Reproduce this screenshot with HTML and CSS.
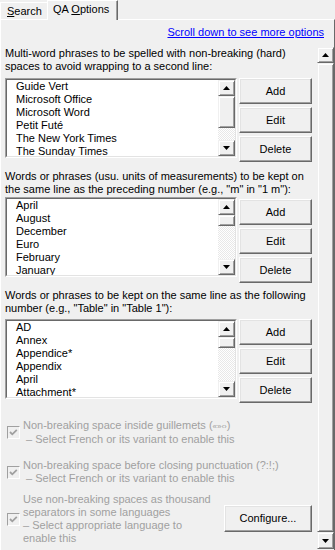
FILE: index.html
```html
<!DOCTYPE html>
<html>
<head>
<meta charset="utf-8">
<link rel="stylesheet" href="styles.css">
</head>
<body>
<div class="tabs">
  <div class="tab"><u>S</u>earch</div>
  <div class="tab active">QA <u>O</u>ptions</div>
</div>
<div class="panel">
  <div class="linkrow"><a class="link" href="#">Scroll down to see more options</a></div>
  <div class="body">
    <div class="content">
      <section class="group g1">
        <p class="label">Multi-word phrases to be spelled with non-breaking (hard)<br>spaces to avoid wrapping to a second line:</p>
        <div class="row">
          <div class="list"><div class="list-in">
            <ul class="items">
              <li>Guide Vert</li><li>Microsoft Office</li><li>Microsoft Word</li><li>Petit Futé</li><li>The New York Times</li><li>The Sunday Times</li>
            </ul>
            <div class="lscroll">
              <div class="arrow raised"><svg width="7" height="4" viewBox="0 0 7 4"><polygon points="0,4 3.5,0 7,4" fill="#000"/></svg></div>
              <div class="thumb raised thumb-lg"></div>
              <div class="track"></div>
              <div class="arrow raised"><svg width="7" height="4" viewBox="0 0 7 4"><polygon points="0,0 7,0 3.5,4" fill="#000"/></svg></div>
            </div>
          </div></div>
          <div class="btns">
            <button class="btn">Add</button>
            <button class="btn">Edit</button>
            <button class="btn">Delete</button>
          </div>
        </div>
      </section>
      <section class="group g2">
        <p class="label">Words or phrases (usu. units of measurements) to be kept on<br>the same line as the preceding number (e.g., "m" in "1&nbsp;m"):</p>
        <div class="row">
          <div class="list"><div class="list-in">
            <ul class="items">
              <li>April</li><li>August</li><li>December</li><li>Euro</li><li>February</li><li>January</li>
            </ul>
            <div class="lscroll">
              <div class="arrow raised"><svg width="7" height="4" viewBox="0 0 7 4"><polygon points="0,4 3.5,0 7,4" fill="#000"/></svg></div>
              <div class="thumb raised thumb-sm"></div>
              <div class="track"></div>
              <div class="arrow raised"><svg width="7" height="4" viewBox="0 0 7 4"><polygon points="0,0 7,0 3.5,4" fill="#000"/></svg></div>
            </div>
          </div></div>
          <div class="btns">
            <button class="btn">Add</button>
            <button class="btn">Edit</button>
            <button class="btn">Delete</button>
          </div>
        </div>
      </section>
      <section class="group g3">
        <p class="label">Words or phrases to be kept on the same line as the following<br>number (e.g., "Table" in "Table&nbsp;1"):</p>
        <div class="row">
          <div class="list"><div class="list-in">
            <ul class="items">
              <li>AD</li><li>Annex</li><li>Appendice*</li><li>Appendix</li><li>April</li><li>Attachment*</li>
            </ul>
            <div class="lscroll">
              <div class="arrow raised"><svg width="7" height="4" viewBox="0 0 7 4"><polygon points="0,4 3.5,0 7,4" fill="#000"/></svg></div>
              <div class="thumb raised thumb-sm"></div>
              <div class="track"></div>
              <div class="arrow raised"><svg width="7" height="4" viewBox="0 0 7 4"><polygon points="0,0 7,0 3.5,4" fill="#000"/></svg></div>
            </div>
          </div></div>
          <div class="btns">
            <button class="btn">Add</button>
            <button class="btn">Edit</button>
            <button class="btn">Delete</button>
          </div>
        </div>
      </section>

      <div class="check c1">
        <span class="cb"><svg width="11" height="11" viewBox="0 0 11 11"><polyline points="2,5 4.3,7.3 8.8,2.8" fill="none" stroke="#a0a0a0" stroke-width="1.8"/></svg></span>
        <p class="ctext">Non-breaking space inside guillemets (<span class="small">«»‹›</span>)<br>&nbsp;– Select French or its variant to enable this</p>
      </div>
      <div class="check c2">
        <span class="cb"><svg width="11" height="11" viewBox="0 0 11 11"><polyline points="2,5 4.3,7.3 8.8,2.8" fill="none" stroke="#a0a0a0" stroke-width="1.8"/></svg></span>
        <p class="ctext">Non-breaking space before closing punctuation (?:!;)<br>&nbsp;– Select French or its variant to enable this</p>
      </div>
      <div class="check c3">
        <span class="cb"><svg width="11" height="11" viewBox="0 0 11 11"><polyline points="2,5 4.3,7.3 8.8,2.8" fill="none" stroke="#a0a0a0" stroke-width="1.8"/></svg></span>
        <p class="ctext grow">Use non-breaking spaces as thousand<br>separators in some languages<br>– Select appropriate language to<br>enable this</p>
        <button class="btn cfg">Configure...</button>
      </div>
    </div>
    <div class="vscroll">
      <div class="varrow raised"><svg width="7" height="4" viewBox="0 0 7 4"><polygon points="0,4 3.5,0 7,4" fill="#000"/></svg></div>
      <div class="vthumb raised"></div>
      <div class="varrow raised"><svg width="7" height="4" viewBox="0 0 7 4"><polygon points="0,0 7,0 3.5,4" fill="#000"/></svg></div>
    </div>
  </div>
</div>
</body>
</html>
```
FILE: styles.css
```css
html, body {
  margin: 0;
  padding: 0;
}
body {
  width: 335px;
  height: 550px;
  overflow: hidden;
  background: #f0f0f0;
  font-family: "Liberation Sans", Arial, sans-serif;
  font-size: 11px;
  line-height: 13px;
  color: #000;
}
p { margin: 0; }
ul { margin: 0; padding: 0; list-style: none; }
u { text-decoration: underline; text-underline-offset: 1px; }

.tabs {
  height: 19px;
  display: flex;
  align-items: flex-end;
  position: relative;
  z-index: 2;
}
.tab {
  box-sizing: border-box;
  height: 17px;
  width: 47px;
  padding: 2px 0 0 6px;
  border-top: 1px solid #fff;
  border-left: 1px solid #fff;
  background: #f0f0f0;
}
.tab.active {
  height: 20px;
  width: 71px;
  margin-bottom: -1px;
  padding: 2px 0 0 5px;
  border-right: 1px solid #696969;
  box-shadow: inset -1px 0 #a0a0a0;
}

.panel {
  box-sizing: border-box;
  height: 531px;
  border-top: 1px solid #fff;
  border-left: 1px solid #fff;
  border-right: 1px solid #696969;
  display: flex;
  flex-direction: column;
}
.linkrow {
  margin: 6px 0 8px;
  padding-right: 10px;
  text-align: right;
}
.link {
  color: #0000ff;
  text-decoration: underline;
}
.body {
  flex: 1;
  display: flex;
  min-height: 0;
}
.content {
  flex: 1;
  padding: 0 5px 0 4px;
  overflow: hidden;
}

.group { display: flex; flex-direction: column; }
.g1 .row { margin-top: 5px; }
.g2 { margin-top: 8px; }
.g2 .row { margin-top: 1px; }
.g2 .btns { padding-top: 2px; }
.g3 { margin-top: 6px; }
.g3 .row { margin-top: 4px; }

.row {
  display: flex;
  align-items: flex-start;
  justify-content: space-between;
}
.list {
  box-sizing: border-box;
  width: 232px;
  height: 80px;
  border: 1px solid;
  border-color: #a0a0a0 #fff #fff #a0a0a0;
}
.list-in {
  box-sizing: border-box;
  height: 100%;
  border: 1px solid;
  border-color: #696969 #e3e3e3 #e3e3e3 #696969;
  background: #fff;
  display: flex;
  overflow: hidden;
}
.items {
  flex: 1;
  padding-left: 9px;
}
.items li { height: 13px; white-space: nowrap; }

.raised {
  box-sizing: border-box;
  background: #f0f0f0;
  border: 1px solid;
  border-color: #f0f0f0 #696969 #696969 #f0f0f0;
  box-shadow: inset 1px 1px #fff, inset -1px -1px #a0a0a0;
}
.lscroll {
  width: 17px;
  display: flex;
  flex-direction: column;
}
.arrow {
  height: 16px;
  flex: none;
  display: flex;
  align-items: center;
  justify-content: center;
}
.thumb { flex: none; }
.thumb-lg { height: 32px; }
.thumb-sm { height: 11px; }
.track {
  flex: 1;
  background: repeating-conic-gradient(#fff 0 25%, #e8e8e8 0 50%) 0 0 / 2px 2px;
}

.btns {
  width: 73px;
  display: flex;
  flex-direction: column;
  gap: 3px;
}
.btn {
  box-sizing: border-box;
  height: 26px;
  width: 73px;
  padding: 0;
  margin: 0;
  font: inherit;
  color: #000;
  background: #f0f0f0;
  border: 1px solid;
  border-color: #fff #696969 #696969 #fff;
  box-shadow: inset -1px -1px #a0a0a0, inset 1px 1px #e3e3e3;
  text-align: center;
}

.check {
  display: flex;
  align-items: center;
  padding-left: 2px;
  color: #a0a0a0;
}
.c1 { margin-top: 16px; }
.c2 { margin-top: 13px; }
.c3 { margin-top: 8px; }
.cb {
  flex: none;
  box-sizing: border-box;
  width: 13px;
  height: 13px;
  border: 1px solid;
  border-color: #a0a0a0 #fff #fff #a0a0a0;
  background: #f0f0f0;
  margin-right: 3px;
  display: flex;
}
.ctext { white-space: nowrap; }
.grow { flex: 1; }
.small { font-size: 8px; }
.btn.cfg {
  width: 88px;
  height: 27px;
  flex: none;
  margin-top: -2px;
}

.vscroll {
  width: 17px;
  flex: none;
  display: flex;
  flex-direction: column;
}
.varrow {
  height: 16px;
  flex: none;
  display: flex;
  align-items: center;
  justify-content: center;
}
.vthumb { flex: 1; }
.vscroll .varrow:last-child { height: 17px; margin-bottom: 1px; }
```
